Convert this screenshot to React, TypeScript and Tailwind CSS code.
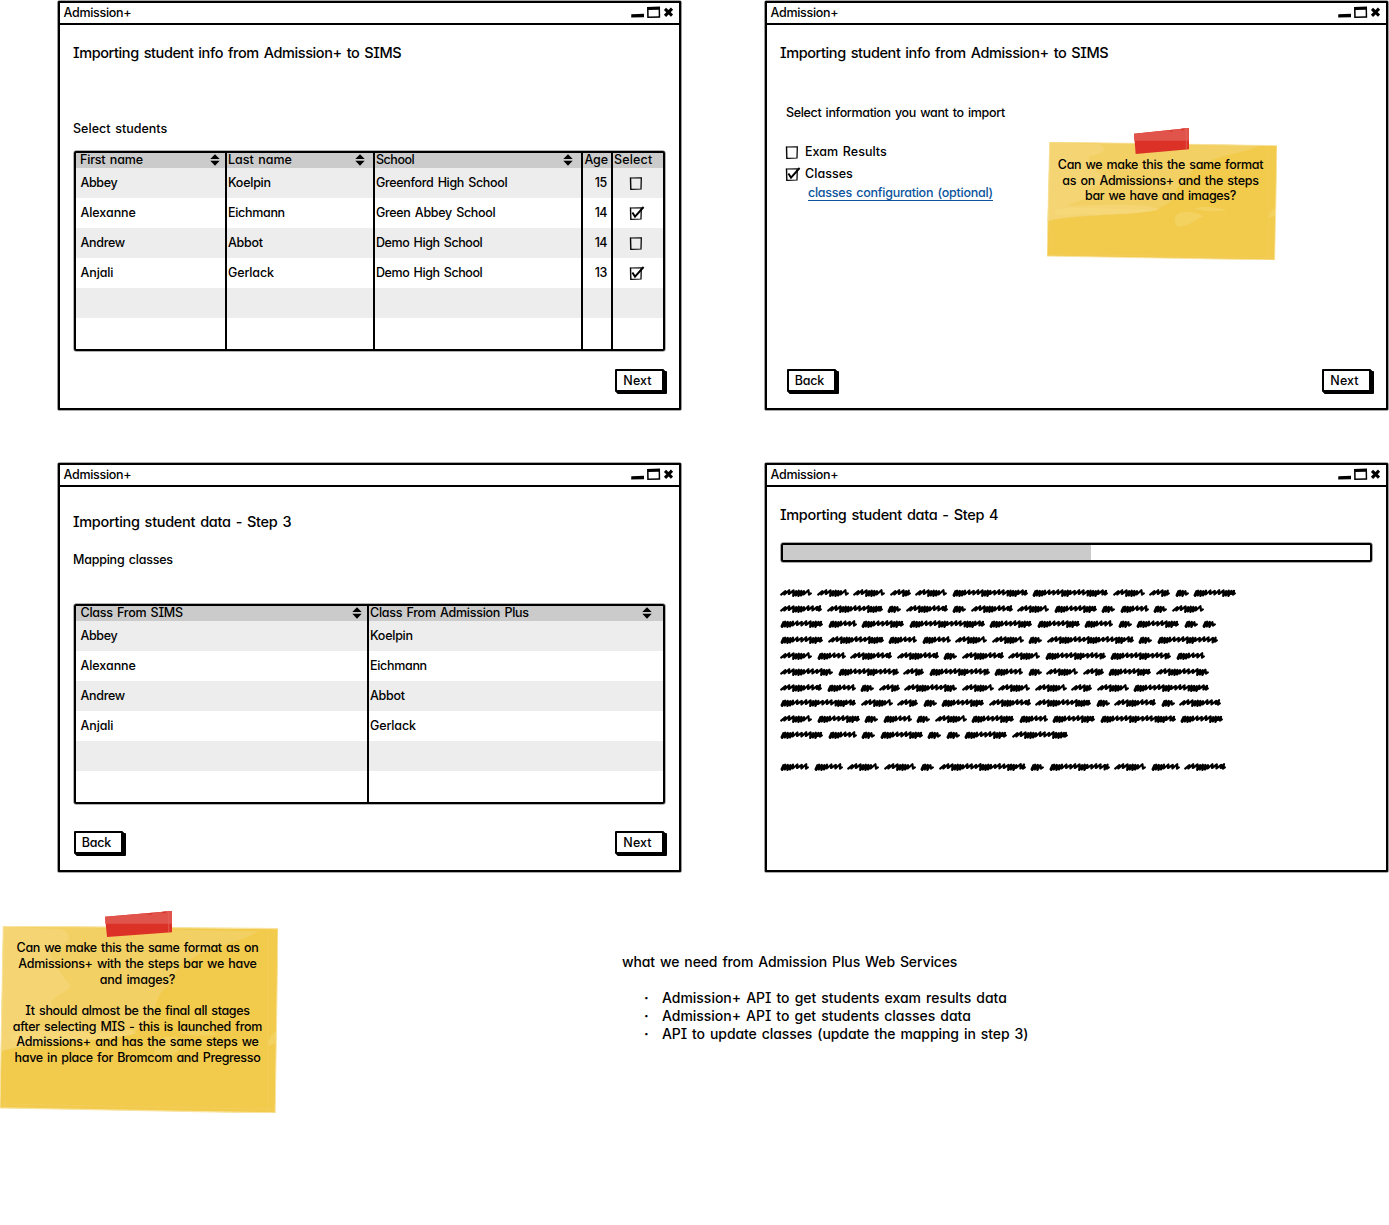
import { useLayoutEffect, useRef, type ReactNode } from "react";

/** Single line of text whose tracking is adjusted so that it spans `w` pixels. */
function Txt({ w, children, className = "" }: { w: number; children: string; className?: string }) {
  const ref = useRef<HTMLSpanElement>(null);
  useLayoutEffect(() => {
    const el = ref.current;
    if (!el) return;
    el.style.letterSpacing = "0px";
    const natural = el.getBoundingClientRect().width;
    el.style.letterSpacing = `${(w + 0.3 - natural) / children.length}px`;
  }, [w, children]);
  return (
    <span ref={ref} className={`inline-block whitespace-pre [word-spacing:0.1em] ${className}`}>
      {children}
    </span>
  );
}

function WindowFrame({ children }: { children: ReactNode }) {
  return (
    <section className="flex h-[409px] w-[623px] flex-col rounded-[1px] border-2 border-black bg-white shadow-[0_0_0_0.6px_#555]">
      <header className="flex h-[22px] shrink-0 items-center justify-between border-b-2 border-black pl-[3.5px] pr-[5px] text-[12.5px]">
        <Txt w={67.5}>Admission+</Txt>
        <svg width="44" height="14" viewBox="0 0 44 14" className="block">
          <path d="M1.3 8.2 L14 7.8 L14 11.3 L1.2 11.5 Z" fill="#000" />
          <path d="M17 .9 L30 .6 L30.2 11.8 L17.2 11.9 Z M18.6 4 L18.7 10.5 L28.7 10.3 L28.6 3.8 Z" fill="#000" fillRule="evenodd" />
          <path d="M35 2.8 L42 9.6 M42 2.6 L35 9.8" stroke="#000" strokeWidth="3.1" />
        </svg>
      </header>
      <div className="flex grow flex-col px-[14px] pb-4">{children}</div>
    </section>
  );
}

function Heading({ w, children }: { w: number; children: string }) {
  return (
    <h2 className="-ml-px flex h-[21px] shrink-0 items-center pt-[2px] text-[14.5px] font-medium">
      <Txt w={w}>{children}</Txt>
    </h2>
  );
}

function SketchButton({ children, w }: { children: string; w: number }) {
  return (
    <button className="flex h-[23px] w-[49px] items-center justify-center rounded-[1px] border-2 border-black bg-white pr-[4px] pt-[2px] shadow-[1px_1px_0_#000,2px_2px_0_#000,3px_2px_0_#000]">
      <Txt w={w}>{children}</Txt>
    </button>
  );
}

function CheckBox({ checked = false }: { checked?: boolean }) {
  return (
    <svg width="16" height="15" viewBox="0 0 16 15" fill="none" className="block shrink-0">
      <path d="M1.6 2 L12.3 1.8 L12 13 L1.9 13.4 Z" stroke="#000" strokeWidth="1.25" />
      <path d="M1.2 1.3 L1.6 13.8" stroke="#000" strokeWidth=".6" />
      {checked && <path d="M3.4 6.6 L6 10.6 L14.6 1" stroke="#000" strokeWidth="1.9" />}
    </svg>
  );
}

function SortIcon({ className }: { className: string }) {
  return (
    <svg width="10" height="12" viewBox="0 0 10 12" className={`mb-[2px] block shrink-0 ${className}`}>
      <path d="M5 .2 L9.7 5.1 H.3 Z M.3 6.8 H9.7 L5 11.7 Z" fill="#000" />
    </svg>
  );
}

type Cell = [string, number];

const students: { cells: Cell[]; age: string; checked: boolean }[] = [
  { cells: [["Abbey", 36.5], ["Koelpin", 42.5], ["Greenford High School", 131]], age: "15", checked: false },
  { cells: [["Alexanne", 55], ["Eichmann", 56.5], ["Green Abbey School", 119]], age: "14", checked: true },
  { cells: [["Andrew", 44], ["Abbot", 34.5], ["Demo High School", 106]], age: "14", checked: false },
  { cells: [["Anjali", 32.5], ["Gerlack", 45.5], ["Demo High School", 106]], age: "13", checked: true },
];

const cell = "flex items-center border-r-2 border-black";

function StudentTable() {
  const cols = "grid grid-cols-[151px_148px_208px_30px_50px]";
  return (
    <div className="mt-3 h-[200px] rounded-[2px] border-2 border-black shadow-[0_0_0_0.5px_#666]">
      <div className={`${cols} h-[15px] bg-[#cbcbcb]`}>
        <div className={`${cell} justify-between pl-1`}>
          <Txt w={62.5}>First name</Txt>
          <SortIcon className="mr-[5px]" />
        </div>
        <div className={`${cell} justify-between pl-px`}>
          <Txt w={63.5}>Last name</Txt>
          <SortIcon className="mr-[8px]" />
        </div>
        <div className={`${cell} justify-between pl-px`}>
          <Txt w={38}>School</Txt>
          <SortIcon className="mr-[8px]" />
        </div>
        <div className={`${cell} pl-[1.5px]`}>
          <Txt w={23}>Age</Txt>
        </div>
        <div className="flex items-center pl-px">
          <Txt w={38}>Select</Txt>
        </div>
      </div>
      {[0, 1, 2, 3, 4, 5].map((i) => {
        const s = students[i];
        return (
          <div key={i} className={`${cols} ${i === 5 ? "h-[31px]" : "h-[30px]"} ${i % 2 ? "bg-white" : "bg-[#ededed]"}`}>
            {[0, 1, 2].map((c) => (
              <div key={c} className={`${cell} ${c ? "pl-px" : "pl-[4.5px]"}`}>
                {s && <Txt w={s.cells[c][1]}>{s.cells[c][0]}</Txt>}
              </div>
            ))}
            <div className={`${cell} justify-end pr-[4px]`}>{s && <Txt w={12}>{s.age}</Txt>}</div>
            <div className="flex items-center pl-[15.5px] pt-px">{s && <CheckBox checked={s.checked} />}</div>
          </div>
        );
      })}
    </div>
  );
}

function ClassTable() {
  const cols = "grid grid-cols-[293px_294px]";
  return (
    <div className="mt-[34px] h-[200px] rounded-[2px] border-2 border-black shadow-[0_0_0_0.5px_#666]">
      <div className={`${cols} h-[15px] bg-[#cbcbcb]`}>
        <div className={`${cell} justify-between pl-[4.5px]`}>
          <Txt w={102}>Class From SIMS</Txt>
          <SortIcon className="mr-[5px]" />
        </div>
        <div className="flex items-center justify-between pl-px">
          <Txt w={158.5}>Class From Admission Plus</Txt>
          <SortIcon className="mr-[11px]" />
        </div>
      </div>
      {[0, 1, 2, 3, 4, 5].map((i) => {
        const s = students[i];
        return (
          <div key={i} className={`${cols} ${i === 5 ? "h-[31px]" : "h-[30px]"} ${i % 2 ? "bg-white" : "bg-[#ededed]"}`}>
            <div className={`${cell} pl-[4.5px]`}>{s && <Txt w={s.cells[0][1]}>{s.cells[0][0]}</Txt>}</div>
            <div className="flex items-center pl-px">{s && <Txt w={s.cells[1][1]}>{s.cells[1][0]}</Txt>}</div>
          </div>
        );
      })}
    </div>
  );
}

/** Yellow paper, drawn in a 688 x 353 box and stretched to the note's size. */
function Paper({ skew }: { skew: number }) {
  const outline = `M8 0 L688 ${skew} L681 353 L0 ${345 - skew / 3} Z`;
  return (
    <svg className="absolute inset-0 h-full w-full" viewBox="0 0 688 353" preserveAspectRatio="none">
      <path d={outline} fill="#f2ca4c" />
      <path d="M8 1 L640 10 C590 34 520 38 480 60 C420 75 440 100 405 120 C370 150 400 175 330 200 C240 225 90 214 2 238 Z" fill="#f3d064" />
      <path d="M8 1 L150 6 C180 12 178 36 135 40 C105 44 150 90 172 110 C180 124 130 130 125 146 C150 160 90 180 60 190 C90 196 250 176 338 200 C260 224 90 212 2 236 Z" fill="#f5d573" />
      <path d="M22 206 C60 186 210 206 340 202 C260 220 120 214 40 218 C26 218 20 212 22 206 Z" fill="#f6d87c" opacity=".7" />
      <path d="M385 222 C400 200 452 210 466 222 C446 230 430 250 396 254 C380 250 380 236 385 222 Z M440 198 C470 190 520 196 538 204 C510 210 460 208 440 198 Z M684 198 C668 204 660 222 664 226 L682 222 Z" fill="#f4d365" opacity=".8" />
      <path d="M662 11 V352 M12 240 V342 M4 336 L680 346" stroke="#f6d67a" strokeWidth="1.5" fill="none" opacity=".45" />
      <path d={outline} fill="none" stroke="#f8e3a0" strokeWidth="2.5" />
    </svg>
  );
}

function Tape({ className }: { className: string }) {
  return (
    <svg className={`absolute h-[26px] ${className}`} viewBox="0 0 164 78" preserveAspectRatio="none">
      <path d="M0 17 L164 0 V64 L5 78 Z" fill="#dc3127" />
      <path d="M0 17 L164 0 V38 H1 Z" fill="#e0544b" />
      <path d="M102 8 L118 6 L112 12 Z M138 3 L152 1 L146 8 Z" fill="#d8362c" />
      <path d="M156 2 V64" stroke="#e5695f" strokeWidth="2" />
    </svg>
  );
}

function NoteLines({ lines }: { lines: Cell[] }) {
  return (
    <>
      {lines.map(([t, w], i) => (
        <p key={i} className="flex h-[15.7px] items-center justify-center pr-[3px]">
          {t && <Txt w={w}>{t}</Txt>}
        </p>
      ))}
    </>
  );
}

// Placeholder words: d = dense start, s = slanted start, followed by the width.
const scribbles = [
  "s32 s32 s32 s21 s32 d76 d76 s32 s21 d14 d43",
  "s42 s56 d14 s42 d14 s42 s32 d43 d14 d29 d14 s32",
  "d43 d29 d43 d76 d43 d43 d29 d14 d43 d14 d14",
  "d43 s56 d29 d29 s32 s32 d14 s87 d14 d61",
  "s32 d29 s42 s42 d14 s42 s32 d61 d61 d29",
  "s53 d61 s21 d61 d29 d14 s32 s21 d43 s53",
  "s42 d29 d14 s21 s53 s32 s32 s32 s21 s32 d76",
  "d76 s32 s21 d14 d43 s42 s56 d14 s42 d14 s42",
  "s32 d43 d14 d29 d14 s32 d43 d29 d43 d76 d43",
  "d43 d29 d14 d43 d14 d14 d43 s56",
  "",
  "d29 d29 s32 s32 d14 s87 d14 d61 s32 d29 s42",
];

function ScribbleWord({ code }: { code: string }) {
  const w = Number(code.slice(1));
  const slanted = code[0] === "s";
  let d = slanted ? "M1.2 7.6 L5.4 4.2" : "M1.6 8.2 L3.4 4.2";
  let x = slanted ? 4.8 : 2.6;
  let i = 0;
  while (x < w - 3.8) {
    const phase = (x + (slanted ? 0 : 12)) % 27;
    const dense = phase > 11.5 && phase < 23;
    const low = dense ? 9 : 7.5;
    const high = dense ? 3.6 : 3.2;
    const step = dense ? 2.6 : 4.4;
    d += ` L${(x - 0.4).toFixed(1)} ${low - (i % 2) * 0.5} L${Math.min(x + step, w - 2).toFixed(1)} ${high + (i % 3) * 0.3}`;
    x += step;
    i += 1;
  }
  d += ` L${(w - 3).toFixed(1)} 7.6 L${w - 1.2} 6.4`;
  return (
    <svg width={w} height="12" viewBox={`0 0 ${w} 12`} className="block shrink-0">
      <path d={d} fill="none" stroke="#000" strokeWidth="2.2" strokeLinejoin="round" strokeLinecap="round" />
    </svg>
  );
}

const apiNeeds: Cell[] = [
  ["Admission+ API to get students exam results data", 344.5],
  ["Admission+ API to get students classes data", 308.5],
  ["API to update classes (update the mapping in step 3)", 366],
];

export default function App() {
  return (
    <main className="h-[1225px] w-[1389px] overflow-hidden bg-white pt-px font-['Inter',sans-serif] text-[12.5px] font-medium leading-none text-black [font-feature-settings:'cv11','cv08','calt'_0]">
      <div className="ml-[58px] grid grid-cols-[623px_623px] gap-x-[84px] gap-y-[53px]">
        <WindowFrame>
          <div className="h-[17px]" />
          <Heading w={328}>Importing student info from Admission+ to SIMS</Heading>
          <p className="-ml-px mt-[55px] flex h-[21px] items-center pt-[2px]">
            <Txt w={94}>Select students</Txt>
          </p>
          <StudentTable />
          <div className="mt-auto flex justify-end pr-px">
            <SketchButton w={28}>Next</SketchButton>
          </div>
        </WindowFrame>

        <WindowFrame>
          <div className="relative flex grow flex-col">
            <div className="h-[17px]" />
            <Heading w={328}>Importing student info from Admission+ to SIMS</Heading>
            <p className="ml-[5px] mt-[39px] flex h-[21px] items-center pt-[2px]">
              <Txt w={218.5}>Select information you want to import</Txt>
            </p>
            <label className="ml-1 mt-[18px] flex h-[22px] items-center gap-1">
              <CheckBox />
              <Txt w={81.5}>Exam Results</Txt>
            </label>
            <label className="ml-1 flex h-[22px] items-center gap-1">
              <CheckBox checked />
              <Txt w={47.5}>Classes</Txt>
            </label>
            <a className="ml-[27px] flex h-4 items-center pt-[2px] text-[#0b549b]">
              <Txt w={184.5} className="border-b border-[#0b549b]">classes configuration (optional)</Txt>
            </a>
            <div className="mt-auto flex justify-between pl-[6px] pr-px">
              <SketchButton w={29}>Back</SketchButton>
              <SketchButton w={28}>Next</SketchButton>
            </div>
            <aside className="absolute left-[266px] top-[103px] h-[131px] w-[230px]">
              <div className="absolute left-0 top-[14px] h-[118px] w-[230px]">
                <Paper skew={11} />
              </div>
              <Tape className="left-[86.5px] top-0 w-[55px]" />
              <div className="relative pt-[29.5px]">
                <NoteLines
                  lines={[
                    ["Can we make this the same format", 205],
                    ["as on Admissions+ and the steps", 196],
                    ["bar we have and images?", 150.5],
                  ]}
                />
              </div>
            </aside>
          </div>
        </WindowFrame>

        <WindowFrame>
          <div className="h-[24px]" />
          <Heading w={218}>Importing student data - Step 3</Heading>
          <p className="-ml-px mt-[17px] flex h-[21px] items-center pt-[2px]">
            <Txt w={99.5}>Mapping classes</Txt>
          </p>
          <ClassTable />
          <div className="mt-auto flex justify-between pr-px">
            <SketchButton w={29}>Back</SketchButton>
            <SketchButton w={28}>Next</SketchButton>
          </div>
        </WindowFrame>

        <WindowFrame>
          <div className="h-[17px]" />
          <Heading w={218}>Importing student data - Step 4</Heading>
          <div className="mt-[18px] h-[19px] w-[591px] rounded-[2px] border-2 border-black shadow-[0_0_0_0.5px_#555]">
            <div className="h-full w-[308px] bg-[#cbcbcb]" />
          </div>
          <div className="-ml-px mt-[23px] flex flex-col">
            {scribbles.map((row, r) => (
              <div key={r} className="flex h-[15.8px] items-center gap-[4.5px]">
                {row && row.split(" ").map((code, i) => <ScribbleWord key={i} code={code} />)}
              </div>
            ))}
          </div>
        </WindowFrame>
      </div>

      <div className="mt-[39px] flex items-start">
        <aside className="relative h-[202px] w-[278px]">
          <div className="absolute left-0 top-[14.5px] h-[187px] w-[278px]">
            <Paper skew={5} />
          </div>
          <Tape className="left-[105px] top-0 w-[67px]" />
          <div className="relative pt-[29.6px]">
            <NoteLines
              lines={[
                ["Can we make this the same format as on", 241.5],
                ["Admissions+ with the steps bar we have", 238],
                ["and images?", 75],
                ["", 0],
                ["It should almost be the final all stages", 224],
                ["after selecting MIS - this is launched from", 249],
                ["Admissions+ and has the same steps we", 242],
                ["have in place for Bromcom and Pregresso", 245.5],
              ]}
            />
          </div>
        </aside>
        <section className="ml-[344px] mt-[42px] text-[14px]">
          <h3 className="flex h-[18px] items-center">
            <Txt w={335}>what we need from Admission Plus Web Services</Txt>
          </h3>
          <ul className="mt-[18px]">
            {apiNeeds.map(([t, w]) => (
              <li key={t} className="flex h-[18px] items-center">
                <span className="w-[40px] pl-[22px] font-bold">·</span>
                <Txt w={w}>{t}</Txt>
              </li>
            ))}
          </ul>
        </section>
      </div>
    </main>
  );
}
